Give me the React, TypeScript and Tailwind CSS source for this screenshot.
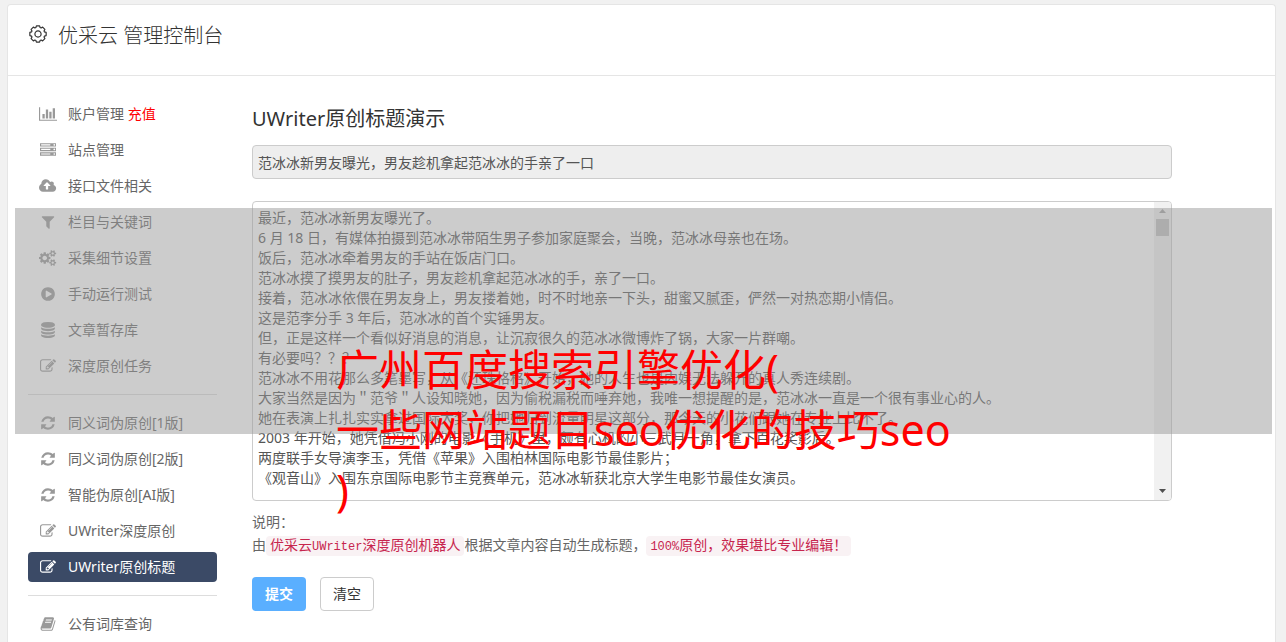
import { useState } from 'react';

type IconName =
  | 'barChart'
  | 'server'
  | 'cloudUpload'
  | 'filter'
  | 'cogs'
  | 'playCircle'
  | 'database'
  | 'edit'
  | 'refresh'
  | 'book';

interface MenuItem {
  id: string;
  label: string;
  icon: IconName;
  extra?: string;
}

const icons: Record<IconName, { width: number; path: string }> = {
  barChart: {
    width: 2048,
    path: 'M640 896v512h-256v-512h256zm384-512v1024h-256v-1024h256zm1024 1152v128h-2048v-1536h128v1408h1920zm-640-896v768h-256v-768h256zm384-384v1152h-256v-1152h256z',
  },
  server: {
    width: 1792,
    path: 'M128 1408h1024v-128h-1024v128zm0-512h1024v-128h-1024v128zm1568 448q0-40-28-68t-68-28-68 28-28 68 28 68 68 28 68-28 28-68zm-1568-960h1024v-128h-1024v128zm1568 448q0-40-28-68t-68-28-68 28-28 68 28 68 68 28 68-28 28-68zm0-512q0-40-28-68t-68-28-68 28-28 68 28 68 68 28 68-28 28-68zm96 832v384h-1792v-384h1792zm0-512v384h-1792v-384h1792zm0-512v384h-1792v-384h1792z',
  },
  cloudUpload: {
    width: 1920,
    path: 'M1280 864q0-14-9-23l-352-352q-9-9-23-9t-23 9l-351 351q-10 12-10 24 0 14 9 23t23 9h224v352q0 13 9.5 22.5t22.5 9.5h192q13 0 22.5-9.5t9.5-22.5v-352h224q13 0 22.5-9.5t9.5-22.5zm640 288q0 159-112.5 271.5t-271.5 112.5h-1088q-185 0-316.5-131.5t-131.5-316.5q0-130 70-240t188-165q-2-30-2-43 0-212 150-362t362-150q156 0 285.5 87t188.5 231q71-62 166-62 106 0 181 75t75 181q0 76-41 138 130 31 213.5 135.5t83.5 238.5z',
  },
  filter: {
    width: 1792,
    path: 'M1595 295q17 41-14 70l-493 493v742q0 42-39 59-13 5-25 5-27 0-45-19l-256-256q-19-19-19-45v-486l-493-493q-31-29-14-70 17-39 59-39h1280q42 0 59 39z',
  },
  cogs: {
    width: 1920,
    path: 'M896 896q0-106-75-181t-181-75-181 75-75 181 75 181 181 75 181-75 75-181zm768 512q0-52-38-90t-90-38-90 38-38 90q0 53 37.5 90.5t90.5 37.5 90.5-37.5 37.5-90.5zm0-1024q0-52-38-90t-90-38-90 38-38 90q0 53 37.5 90.5t90.5 37.5 90.5-37.5 37.5-90.5zm-384 421v185q0 10-7 19.5t-16 10.5l-155 24q-11 35-32 76 34 48 90 115 7 11 7 20 0 12-7 19-23 30-82.5 89.5t-78.5 59.5q-11 0-21-7l-115-90q-37 19-77 31-11 108-23 155-7 24-30 24h-186q-11 0-20-7.5t-10-17.5l-23-153q-34-10-75-31l-118 89q-7 7-20 7-11 0-21-8-144-133-144-160 0-9 7-19 10-14 41-53t47-61q-23-44-35-82l-152-24q-10-1-17-9.5t-7-19.5v-185q0-10 7-19.5t16-10.5l155-24q11-35 32-76-34-48-90-115-7-11-7-20 0-12 7-20 22-30 82-89t79-59q11 0 21 7l115 90q34-18 77-32 11-108 23-154 7-24 30-24h186q11 0 20 7.5t10 17.5l23 153q34 10 75 31l118-89q8-7 20-7 11 0 21 8 144 133 144 160 0 8-7 19-12 16-42 54t-45 60q23 48 34 82l152 23q10 2 17 10.5t7 19.5zm640 533v140q0 16-149 31-12 27-30 52 51 113 51 138 0 4-4 7-122 71-124 71-8 0-46-47t-52-68q-20 2-30 2t-30-2q-14 21-52 68t-46 47q-2 0-124-71-4-3-4-7 0-25 51-138-18-25-30-52-149-15-149-31v-140q0-16 149-31 13-29 30-52-51-113-51-138 0-4 4-7 4-2 35-20t59-34 30-16q8 0 46 46.5t52 67.5q20-2 30-2t30 2q51-71 92-112l6-2q4 0 124 70 4 3 4 7 0 25-51 138 17 23 30 52 149 15 149 31zm0-1024v140q0 16-149 31-12 27-30 52 51 113 51 138 0 4-4 7-122 71-124 71-8 0-46-47t-52-68q-20 2-30 2t-30-2q-14 21-52 68t-46 47q-2 0-124-71-4-3-4-7 0-25 51-138-18-25-30-52-149-15-149-31v-140q0-16 149-31 13-29 30-52-51-113-51-138 0-4 4-7 4-2 35-20t59-34 30-16q8 0 46 46.5t52 67.5q20-2 30-2t30 2q51-71 92-112l6-2q4 0 124 70 4 3 4 7 0 25-51 138 17 23 30 52 149 15 149 31z',
  },
  playCircle: {
    width: 1792,
    path: 'M896 128q209 0 385.5 103t279.5 279.5 103 385.5-103 385.5-279.5 279.5-385.5 103-385.5-103-279.5-279.5-103-385.5 103-385.5 279.5-279.5 385.5-103zm384 823q32-18 32-55t-32-55l-544-320q-31-19-64-1-32 19-32 56v640q0 37 32 56 16 8 32 8 17 0 32-9z',
  },
  database: {
    width: 1792,
    path: 'M896 768q237 0 443-43t325-127v170q0 69-103 128t-280 93.5-385 34.5-385-34.5-280-93.5-103-128v-170q119 84 325 127t443 43zm0 768q237 0 443-43t325-127v170q0 69-103 128t-280 93.5-385 34.5-385-34.5-280-93.5-103-128v-170q119 84 325 127t443 43zm0-384q237 0 443-43t325-127v170q0 69-103 128t-280 93.5-385 34.5-385-34.5-280-93.5-103-128v-170q119 84 325 127t443 43zm0-1152q208 0 385 34.5t280 93.5 103 128v128q0 69-103 128t-280 93.5-385 34.5-385-34.5-280-93.5-103-128v-128q0-69 103-128t280-93.5 385-34.5z',
  },
  edit: {
    width: 1792,
    path: 'M888 1184l116-116-152-152-116 116v56h96v96h56zm440-720q-16-16-33 1l-350 350q-17 17-1 33t33-1l350-350q17-17 1-33zm80 594v190q0 119-84.5 203.5t-203.5 84.5h-832q-119 0-203.5-84.5t-84.5-203.5v-832q0-119 84.5-203.5t203.5-84.5h832q63 0 117 25 15 7 18 23 3 17-9 29l-49 49q-14 14-32 8-23-6-45-6h-832q-66 0-113 47t-47 113v832q0 66 47 113t113 47h832q66 0 113-47t47-113v-126q0-13 9-22l64-64q15-15 35-7t20 29zm-96-738l288 288-672 672h-288v-288zm444 132l-92 92-288-288 92-92q28-28 68-28t68 28l152 152q28 28 28 68t-28 68z',
  },
  refresh: {
    width: 1792,
    path: 'M1639 1056q0 5-1 7-64 268-268 434.5t-478 166.5q-146 0-282.5-55t-243.5-157l-129 129q-19 19-45 19t-45-19-19-45v-448q0-26 19-45t45-19h448q26 0 45 19t19 45-19 45l-137 137q71 66 161 102t187 36q134 0 250-65t186-179q11-17 53-117 8-23 30-23h192q13 0 22.5 9.5t9.5 22.5zm25-800v448q0 26-19 45t-45 19h-448q-26 0-45-19t-19-45 19-45l138-138q-148-137-349-137-134 0-250 65t-186 179q-11 17-53 117-8 23-30 23h-199q-13 0-22.5-9.5t-9.5-22.5v-7q65-268 270-434.5t480-166.5q146 0 284 55.5t245 156.5l130-129q19-19 45-19t45 19 19 45z',
  },
  book: {
    width: 1792,
    path: 'M1703 478q40 57 18 129l-275 906q-19 64-76.5 107.5t-122.5 43.5h-923q-77 0-148.5-53.5t-99.5-131.5q-24-67-2-127 0-4 3-27t4-37q1-8-3-21.5t-3-19.5q2-11 8-21t16.5-23.5 16.5-23.5q23-38 45-91.5t30-91.5q3-10 .5-30t-.5-28q3-11 17-28t17-23q21-36 42-92t25-90q1-9-2.5-32t.5-28q4-13 22-30.5t22-22.5q19-26 42.5-84.5t27.5-96.5q1-8-3-25.5t-2-26.5q2-8 9-18t18-23 17-21q8-12 16.5-30.5t15-35 16-36 19.5-32 26.5-23.5 36-11.5 47.5 5.5l-1 3q38-9 51-9h761q74 0 114 56t18 130l-274 906q-36 119-71.5 153.5t-128.5 34.5h-869q-27 0-38 15-11 16-1 43 24 70 144 70h923q29 0 56-15.5t35-41.5l300-987q7-22 5-57 38 15 59 43zm-1064 2q-4 13 2 22.5t20 9.5h608q13 0 25.5-9.5t16.5-22.5l21-64q4-13-2-22.5t-20-9.5h-608q-13 0-25.5 9.5t-16.5 22.5zm-83 256q-4 13 2 22.5t20 9.5h608q13 0 25.5-9.5t16.5-22.5l21-64q4-13-2-22.5t-20-9.5h-608q-13 0-25.5 9.5t-16.5 22.5z',
  },
};

const menuGroups: MenuItem[][] = [
  [
    { id: 'account', label: '账户管理', icon: 'barChart', extra: '充值' },
    { id: 'sites', label: '站点管理', icon: 'server' },
    { id: 'api', label: '接口文件相关', icon: 'cloudUpload' },
    { id: 'keywords', label: '栏目与关键词', icon: 'filter' },
    { id: 'collect', label: '采集细节设置', icon: 'cogs' },
    { id: 'run', label: '手动运行测试', icon: 'playCircle' },
    { id: 'articles', label: '文章暂存库', icon: 'database' },
    { id: 'tasks', label: '深度原创任务', icon: 'edit' },
  ],
  [
    { id: 'synonym1', label: '同义词伪原创[1版]', icon: 'refresh' },
    { id: 'synonym2', label: '同义词伪原创[2版]', icon: 'refresh' },
    { id: 'ai', label: '智能伪原创[AI版]', icon: 'refresh' },
    { id: 'uwriter', label: 'UWriter深度原创', icon: 'edit' },
    { id: 'uwriter-title', label: 'UWriter原创标题', icon: 'edit' },
  ],
  [{ id: 'dictionary', label: '公有词库查询', icon: 'book' }],
];

const demoTitle = '范冰冰新男友曝光，男友趁机拿起范冰冰的手亲了一口';

const demoArticle = `最近，范冰冰新男友曝光了。
6 月 18 日，有媒体拍摄到范冰冰带陌生男子参加家庭聚会，当晚，范冰冰母亲也在场。
饭后，范冰冰牵着男友的手站在饭店门口。
范冰冰摸了摸男友的肚子，男友趁机拿起范冰冰的手，亲了一口。
接着，范冰冰依偎在男友身上，男友搂着她，时不时地亲一下头，甜蜜又腻歪，俨然一对热恋期小情侣。
这是范李分手 3 年后，范冰冰的首个实锤男友。
但，正是这样一个看似好消息的消息，让沉寂很久的范冰冰微博炸了锅，大家一片群嘲。
有必要吗？？？
范冰冰不用花那么多笔墨写，从《还珠格格》开始，她的人生也是内娱无法躲开的真人秀连续剧。
大家当然是因为＂范爷＂人设知晓她，因为偷税漏税而唾弃她，我唯一想提醒的是，范冰冰一直是一个很有事业心的人。
她在表演上扎扎实实拿过国际大奖，你把她归到流量明星这部分，那今天的小花们跟她在专业上比不了。
2003 年开始，她凭借冯小刚的电影《手机》里，颇有心机的小三武月一角，拿下百花奖影后。
两度联手女导演李玉，凭借《苹果》入围柏林国际电影节最佳影片；
《观音山》入围东京国际电影节主竞赛单元，范冰冰斩获北京大学生电影节最佳女演员。
`;

const Icon = ({ name }: { name: IconName }) => (
  <span className="flex w-5 shrink-0 justify-center">
    <svg viewBox={`0 0 ${icons[name].width} 1792`} className="h-4 w-auto" fill="currentColor" aria-hidden="true">
      <path d={icons[name].path} />
    </svg>
  </span>
);

const GearIcon = () => (
  <svg viewBox="-10 -10 20 20" className="mb-1 size-5" fill="none" stroke="currentColor" aria-hidden="true">
    <path
      d="M8.15-1.58V1.58L6.47 2.1 6.05 3.09 6.88 4.64 4.64 6.88 3.09 6.05 2.1 6.47 1.58 8.15H-1.58L-2.1 6.47-3.09 6.05-4.64 6.88-6.88 4.64-6.05 3.09-6.47 2.1-8.15 1.58V-1.58L-6.47-2.1-6.05-3.09-6.88-4.64-4.64-6.88-3.09-6.05-2.1-6.47-1.58-8.15H1.58L2.1-6.47 3.09-6.05 4.64-6.88 6.88-4.64 6.05-3.09 6.47-2.1z"
      strokeWidth="1.2"
      strokeLinejoin="round"
    />
    <circle r="3.1" strokeWidth="1.2" />
  </svg>
);

const Sidebar = ({ current, onSelect }: { current: string; onSelect: (id: string) => void }) => (
  <nav className="w-[189px] shrink-0">
    {menuGroups.map((group, index) => (
      <ul
        key={group[0].id}
        className={`flex flex-col gap-1.5 ${index > 0 ? 'mt-[13px] border-t border-[#ddd] pt-[13px]' : ''}`}
      >
        {group.map((item) => {
          const isActive = item.id === current;

          return (
            <li key={item.id}>
              <a
                href={`#${item.id}`}
                onClick={() => onSelect(item.id)}
                className={`flex h-[30px] items-center gap-2.5 rounded px-2.5 whitespace-nowrap ${
                  isActive ? 'bg-[#3b4a66] text-white' : 'text-[#666]'
                }`}
              >
                <span className={isActive ? 'text-white' : 'text-[#999]'}>
                  <Icon name={item.icon} />
                </span>
                <span>
                  {item.label}
                  {item.extra && <span className="text-[#f00]"> {item.extra}</span>}
                </span>
              </a>
            </li>
          );
        })}
      </ul>
    ))}
  </nav>
);

const ScrollBar = () => (
  <div className="flex w-[17px] shrink-0 flex-col items-center justify-between bg-[#f1f1f1]" aria-hidden="true">
    <div className="flex flex-col items-center">
      <svg viewBox="0 0 17 17" className="size-[17px]" fill="#a3a3a3">
        <path d="M5 11h7L8.500 7z" />
      </svg>
      <div className="h-[17px] w-[13px] bg-[#c1c1c1]" />
    </div>
    <svg viewBox="0 0 17 17" className="size-[17px]" fill="#505050">
      <path d="M5 6h7L8.500 10z" />
    </svg>
  </div>
);

const App = () => {
  const [current, setCurrent] = useState('uwriter-title');
  const [title, setTitle] = useState(demoTitle);
  const [article, setArticle] = useState(demoArticle);

  const handleClear = () => {
    setTitle('');
    setArticle('');
  };

  return (
    <div className="relative flex min-h-screen flex-col bg-[#f1f1f1] pt-1 pr-2.5 pl-[7px] font-['Noto_Sans','Noto_Sans_CJK_SC',sans-serif] text-sm text-[#666]">
      <div className="grow rounded-t border border-b-0 border-[#e5e5e5] bg-white">
        <header className="flex h-[71px] items-center gap-2.5 border-b border-[#e5e5e5] px-5 pb-2 text-[#333]">
          <GearIcon />
          <h1 className="text-xl font-light">优采云 管理控制台</h1>
        </header>

        <div className="flex gap-[35px] px-5 pt-[23px]">
          <Sidebar current={current} onSelect={setCurrent} />

          <main className="max-w-[920px] min-w-0 flex-1 pt-1.5">
            <h2 className="text-xl leading-7 text-[#333]">
              <label htmlFor="title">UWriter原创标题演示</label>
            </h2>
            <input
              id="title"
              type="text"
              readOnly
              value={title}
              className="mt-3 block h-[34px] w-full rounded border border-[#ccc] bg-[#eee] px-[5px] text-[#555]"
            />

            <div className="mt-[22px] flex h-[300px] overflow-hidden rounded border border-[#ccc] bg-white">
              <textarea
                aria-label="文章内容"
                value={article}
                onChange={(e) => setArticle(e.target.value)}
                className="min-w-0 flex-1 resize-none overflow-hidden px-[5px] py-1.5 leading-5 text-[#555] outline-none"
              />
              <ScrollBar />
            </div>

            <p className="mt-[9px] leading-[23px]">
              说明：
              <br />
              由
              <code className="rounded bg-[#f9f2f4] px-1 py-0.5 font-['Liberation_Mono','Noto_Sans_CJK_SC',monospace] text-[#c7254e]">
                优采云<span className="text-xs">UWriter</span>深度原创机器人
              </code>
              根据文章内容自动生成标题，
              <code className="rounded bg-[#f9f2f4] px-1 py-0.5 font-['Liberation_Mono','Noto_Sans_CJK_SC',monospace] text-[#c7254e]">
                <span className="text-xs">100%</span>原创，效果堪比专业编辑！
              </code>
            </p>

            <div className="mt-[19px] flex gap-3.5">
              <button type="submit" className="h-[34px] w-[54px] rounded bg-[#5aafff] font-bold text-white">
                提交
              </button>
              <button
                type="button"
                onClick={handleClear}
                className="h-[34px] w-[54px] rounded border border-[#ccc] bg-white text-[#333]"
              >
                清空
              </button>
            </div>
          </main>
        </div>
      </div>

      {/* Caption over the page */}
      <div className="pointer-events-none absolute top-[208px] right-3.5 left-[15px] h-[226px] bg-[#999]/50" />
      <p className="pointer-events-none absolute top-[340px] left-[336px] text-[43px] leading-[60px] text-[#f00]">
        广州百度搜索引擎优化(
        <br />
        一些网站题目seo优化的技巧seo
        <br />)
      </p>
    </div>
  );
};

export default App;
